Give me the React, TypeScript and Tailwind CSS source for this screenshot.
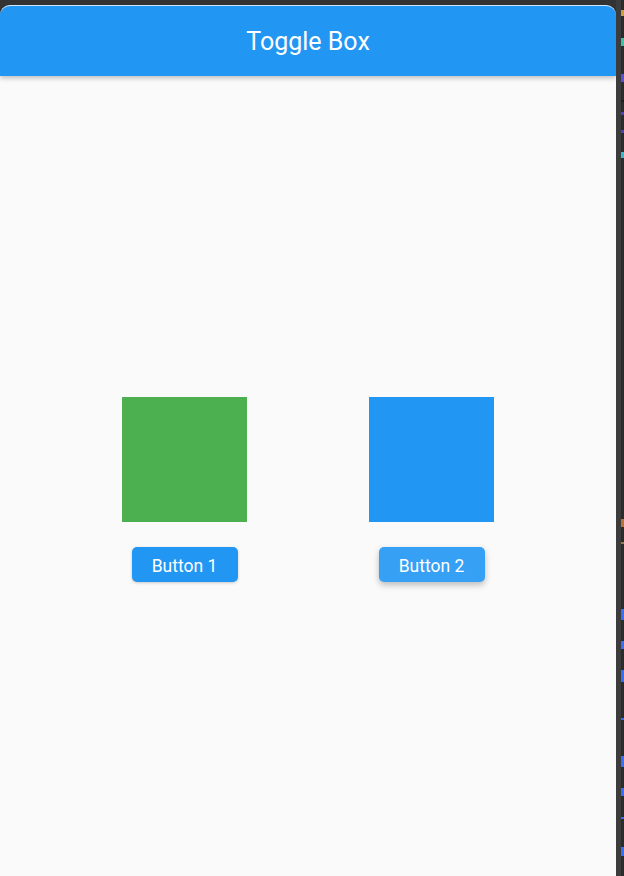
import React, { useState } from 'react';

// cut-off code glyphs of the editor behind the window
const editorMarks = [
  { top: 10, h: 6, color: 'bg-[#d19a45]' },
  { top: 38, h: 8, color: 'bg-[#3fbfa5]' },
  { top: 74, h: 8, color: 'bg-[#5a4fd0]' },
  { top: 100, h: 2, color: 'bg-[#1c1c1c]' },
  { top: 112, h: 3, color: 'bg-[#4a45b0]' },
  { top: 130, h: 3, color: 'bg-[#4a45b0]' },
  { top: 152, h: 6, color: 'bg-[#3fb6c8]' },
  { top: 519, h: 8, color: 'bg-[#b7743a]' },
  { top: 542, h: 2, color: 'bg-[#9a7a4a]' },
  { top: 609, h: 11, color: 'bg-[#3a6ff0]' },
  { top: 641, h: 8, color: 'bg-[#3a6ff0]' },
  { top: 670, h: 12, color: 'bg-[#3a6ff0]' },
  { top: 718, h: 2, color: 'bg-[#3a6ff0]' },
  { top: 756, h: 11, color: 'bg-[#3a6ff0]' },
  { top: 788, h: 8, color: 'bg-[#3a6ff0]' },
  { top: 817, h: 2, color: 'bg-[#3a6ff0]' },
  { top: 847, h: 9, color: 'bg-[#3a6ff0]' },
];

const ToggleColumn: React.FC<{ label: string; color: string; raised?: boolean; onClick: () => void }> = ({
  label,
  color,
  raised,
  onClick,
}) => {
  return (
    <div className="flex flex-col items-center">
      <div className={`w-[125px] h-[125px] ${color}`} />
      <button
        type="button"
        onClick={onClick}
        className={
          raised
            ? 'mt-[25px] w-[106px] h-[35px] pt-[3px] rounded-[5px] bg-[#35a0f4] text-white text-[17.5px] shadow-[0_3px_6px_rgba(0,0,0,0.25)]'
            : 'mt-[25px] w-[106px] h-[35px] pt-[3px] rounded-[5px] bg-[#2196f3] text-white text-[17.5px] shadow-[0_1px_3px_rgba(0,0,0,0.2)]'
        }
      >
        {label}
      </button>
    </div>
  );
};

const App: React.FC = () => {
  const [firstGreen, setFirstGreen] = useState(true);

  return (
    <div className="relative h-[876px] w-[624px] overflow-hidden bg-[#333333] font-['Roboto',sans-serif]">
      <div className="flex h-full">
        <div className="mt-[5px] w-[616px] h-[900px] flex flex-col rounded-t-[10px] overflow-hidden bg-[#fafafa] border-t border-[#cfe6fb]">
          <header className="relative z-10 h-[70px] shrink-0 flex items-center justify-center bg-[#2196f3] shadow-[0_2px_5px_rgba(0,0,0,0.25)]">
            <h1 className="text-white text-[25px] leading-none">Toggle Box</h1>
          </header>
          <main className="h-[827px] flex items-center justify-evenly">
            <ToggleColumn
              label="Button 1"
              color={firstGreen ? 'bg-[#4caf50]' : 'bg-[#2196f3]'}
              onClick={() => setFirstGreen(!firstGreen)}
            />
            <ToggleColumn
              label="Button 2"
              color={firstGreen ? 'bg-[#2196f3]' : 'bg-[#4caf50]'}
              raised
              onClick={() => setFirstGreen(!firstGreen)}
            />
          </main>
        </div>
        <div className="w-[5px] h-full bg-[#3c3c3c]" />
        <div className="relative w-[3px] h-full bg-[#2b2b2b]">
          {editorMarks.map((m) => (
            <div key={m.top} className={`absolute left-0 w-[3px] ${m.color}`} style={{ top: m.top, height: m.h }} />
          ))}
        </div>
      </div>
    </div>
  );
};

export default App;
